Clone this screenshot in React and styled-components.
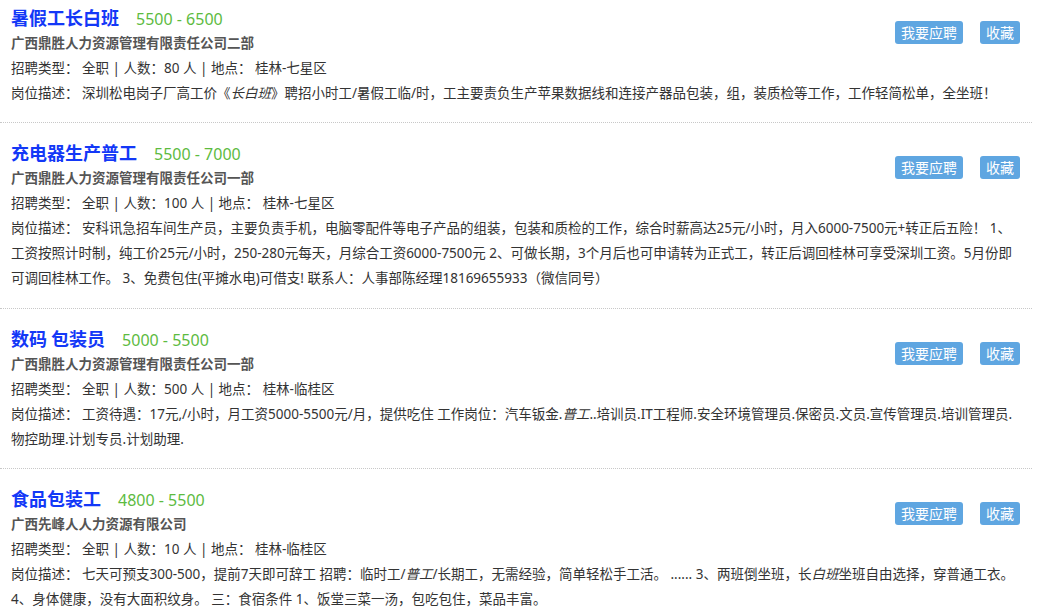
import React from "react";
import styled, { createGlobalStyle } from "styled-components";

const GlobalStyle = createGlobalStyle`
  html, body {
    margin: 0;
    padding: 0;
    background: #fff;
  }
  body {
    font-family: "Noto Sans", "Noto Sans CJK SC", sans-serif;
    font-size: 13.5px;
    color: #333;
    overflow: hidden;
  }
`;

const jobs = [
  {
    title: "暑假工长白班",
    salary: "5500 - 6500",
    company: "广西鼎胜人力资源管理有限责任公司二部",
    count: 80,
    place: "桂林-七星区",
    desc: [
      "深圳松电岗子厂高工价《",
      { em: "长白班" },
      "》聘招小时工/暑假工临/时，工主要责负生产苹果数据线和连接产器品包装，组，装质检等工作，工作轻简松单，全坐班！",
    ],
  },
  {
    title: "充电器生产普工",
    salary: "5500 - 7000",
    company: "广西鼎胜人力资源管理有限责任公司一部",
    count: 100,
    place: "桂林-七星区",
    desc: [
      "安科讯急招车间生产员，主要负责手机，电脑零配件等电子产品的组装，包装和质检的工作，综合时薪高达25元/小时，月入6000-7500元+转正后五险！ 1、工资按照计时制，纯工价25元/小时，250-280元每天，月综合工资6000-7500元 2、可做长期，3个月后也可申请转为正式工，转正后调回桂林可享受深圳工资。5月份即可调回桂林工作。 3、免费包住(平摊水电)可借支! 联系人：人事部陈经理18169655933（微信同号）",
    ],
  },
  {
    title: "数码 包装员",
    salary: "5000 - 5500",
    company: "广西鼎胜人力资源管理有限责任公司一部",
    count: 500,
    place: "桂林-临桂区",
    desc: [
      "工资待遇：17元,/小时，月工资5000-5500元/月，提供吃住 工作岗位：汽车钣金.",
      { em: "普工" },
      "..培训员.IT工程师.安全环境管理员.保密员.文员.宣传管理员.培训管理员.物控助理.计划专员.计划助理.",
    ],
  },
  {
    title: "食品包装工",
    salary: "4800 - 5500",
    company: "广西先峰人人力资源有限公司",
    count: 10,
    place: "桂林-临桂区",
    desc: [
      "七天可预支300-500，提前7天即可辞工 招聘：临时工/",
      { em: "普工" },
      "/长期工，无需经验，简单轻松手工活。 ...... 3、两班倒坐班，长",
      { em: "白班" },
      "坐班自由选择，穿普通工衣。 4、身体健康，没有大面积纹身。 三：食宿条件 1、饭堂三菜一汤，包吃包住，菜品丰富。",
    ],
  },
];

// list is scrolled a little, so the first card's top edge sits above the window
const List = styled.ul`
  list-style: none;
  margin: -13.5px 6px 0 0;
  padding: 0;
`;

const Item = styled.li`
  padding: 16px 9px 16.5px 11px;
  border-top: 1px dotted #c8c8c8;
  line-height: 25px;
`;

const Actions = styled.div`
  float: right;
  display: flex;
  gap: 17px;
  margin: 17px 3px 0 0;
`;

const Button = styled.a`
  display: inline-block;
  height: 23px;
  line-height: 23px;
  padding: 0 6px;
  border-radius: 3px;
  background: #5fa6e1;
  color: #fff;
  font-family: "Noto Sans CJK SC", sans-serif;
  font-size: 14px;
  cursor: pointer;
  text-decoration: none;
`;

const TitleRow = styled.div`
  display: flex;
  align-items: baseline;
  gap: 17px;
  height: 27px;
  line-height: 27px;
`;

const Title = styled.a`
  font-family: "Noto Sans CJK SC", sans-serif;
  font-size: 18px;
  font-weight: bold;
  color: #1338f7;
  text-decoration: none;
`;

const Salary = styled.span`
  font-size: 16px;
  color: #5dbb3f;
`;

const Company = styled.div`
  font-weight: bold;
  color: #555;
`;

const Line = styled.div`
  color: #333;
`;

const Em = styled.em`
  font-style: italic;
`;

function Desc({ parts }) {
  return (
    <Line>
      岗位描述：&nbsp;
      {parts.map((p, i) =>
        typeof p === "string" ? <React.Fragment key={i}>{p}</React.Fragment> : <Em key={i}>{p.em}</Em>
      )}
    </Line>
  );
}

export default function App() {
  return (
    <>
      <GlobalStyle />
      <List>
        {jobs.map((job) => (
          <Item key={job.title}>
            <Actions>
              <Button>我要应聘</Button>
              <Button>收藏</Button>
            </Actions>
            <TitleRow>
              <Title>{job.title}</Title>
              <Salary>{job.salary}</Salary>
            </TitleRow>
            <Company>{job.company}</Company>
            <Line>
              招聘类型：&nbsp;全职 | 人数：{job.count} 人 | 地点：&nbsp;{job.place}
            </Line>
            <Desc parts={job.desc} />
          </Item>
        ))}
      </List>
    </>
  );
}
